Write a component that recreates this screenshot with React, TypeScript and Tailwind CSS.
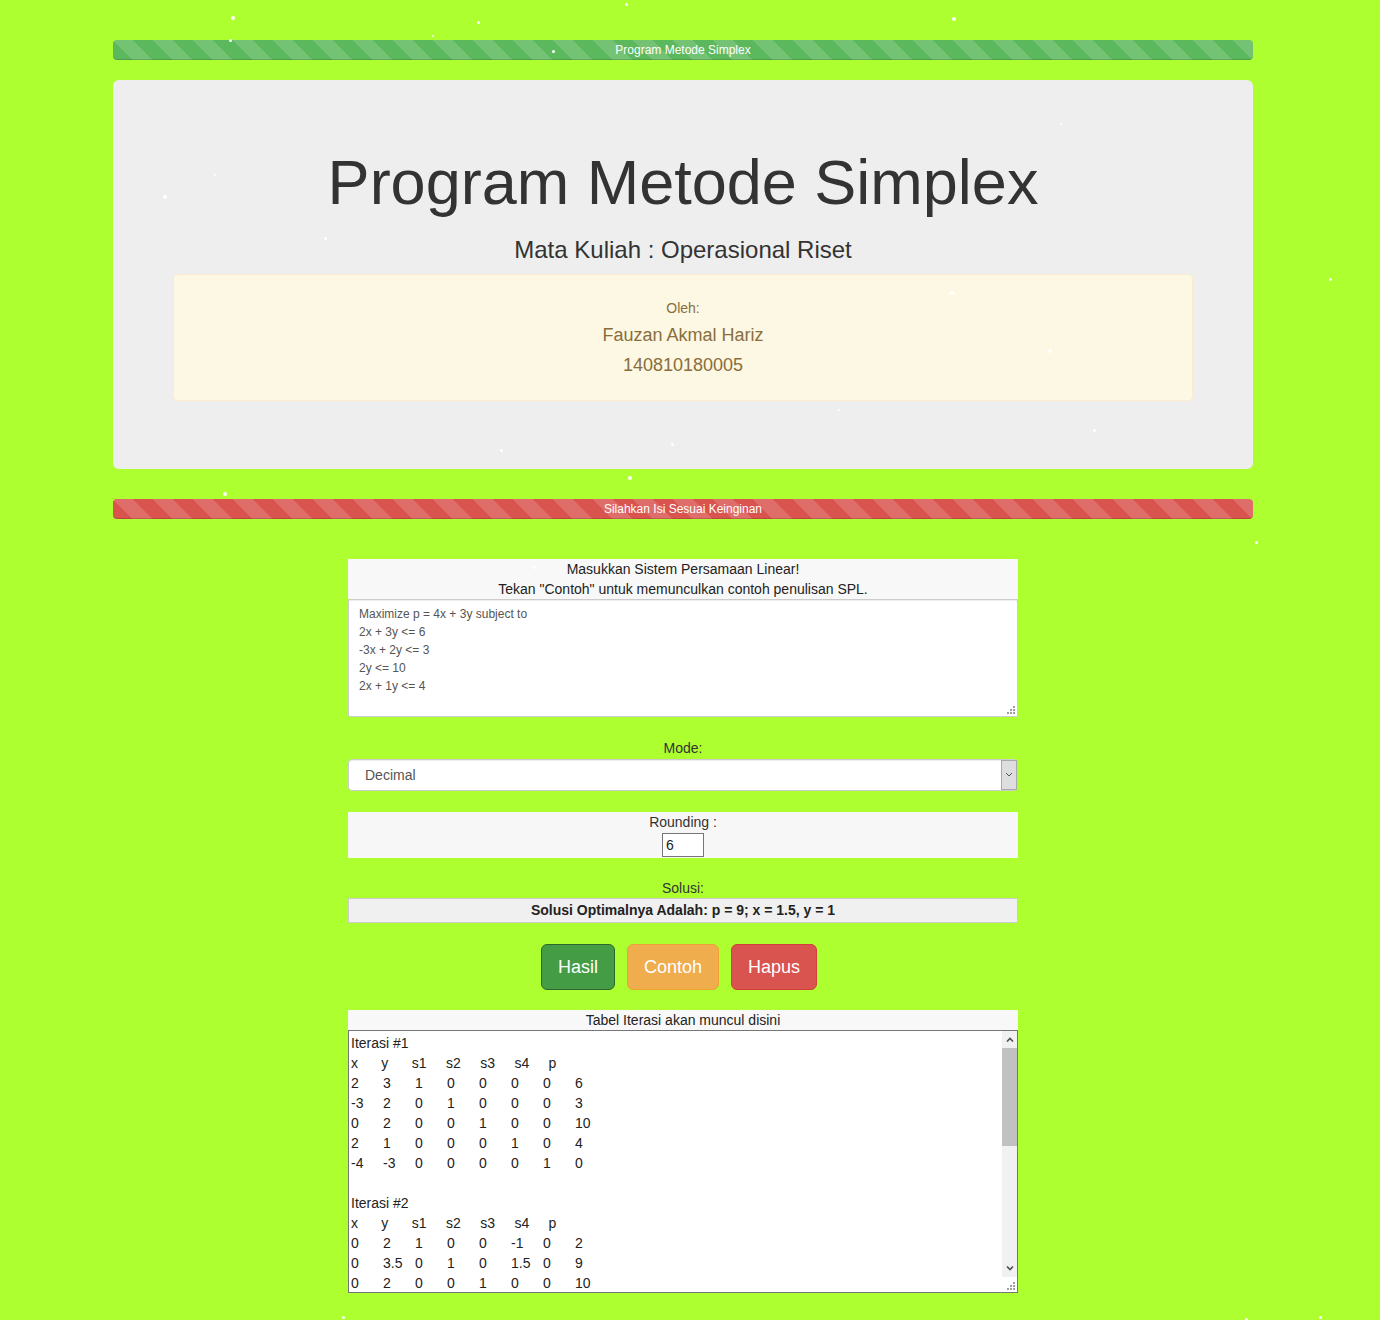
import { useState } from "react";

const stripes =
  "bg-[linear-gradient(45deg,rgba(255,255,255,.15)_25%,transparent_25%,transparent_50%,rgba(255,255,255,.15)_50%,rgba(255,255,255,.15)_75%,transparent_75%,transparent)] bg-[length:40px_40px]";

// snow flakes floating over the page
const flakes: [number, number, number][] = [
  [231, 16, 4], [477, 21, 3], [625, 3, 3], [952, 17, 4], [229, 39, 3], [552, 50, 3],
  [432, 35, 2], [163, 195, 4], [214, 174, 2], [324, 237, 3], [1329, 278, 3], [950, 291, 4],
  [1048, 349, 4], [838, 409, 2], [1093, 429, 3], [671, 443, 3], [500, 449, 3], [628, 476, 4],
  [223, 492, 4], [1255, 541, 3], [1245, 1318, 3], [342, 1316, 3], [1319, 1316, 3], [533, 566, 3],
  [1060, 123, 2],
];

const iter = (n: number, rows: string[]) =>
  [`Iterasi #${n}`, "x      y      s1     s2     s3     s4     p", ...rows].join("\n");

const tableText = [
  iter(1, [
    "2\t3\t1\t0\t0\t0\t0\t6",
    "-3\t2\t0\t1\t0\t0\t0\t3",
    "0\t2\t0\t0\t1\t0\t0\t10",
    "2\t1\t0\t0\t0\t1\t0\t4",
    "-4\t-3\t0\t0\t0\t0\t1\t0",
  ]),
  iter(2, [
    "0\t2\t1\t0\t0\t-1\t0\t2",
    "0\t3.5\t0\t1\t0\t1.5\t0\t9",
    "0\t2\t0\t0\t1\t0\t0\t10",
    "1\t0.5\t0\t0\t0\t0.5\t0\t2",
    "0\t-1\t0\t0\t0\t2\t1\t8",
  ]),
  iter(3, [
    "0\t1\t0.5\t0\t0\t-0.5\t0\t1",
    "0\t0\t-1.75\t1\t0\t3.25\t0\t5.5",
    "0\t0\t-1\t0\t1\t1\t0\t8",
    "1\t0\t-0.25\t0\t0\t0.75\t0\t1.5",
    "0\t0\t0.5\t0\t0\t1.5\t1\t9",
  ]),
].join("\n\n") + "\n\n";

const example = `Maximize p = 4x + 3y subject to
2x + 3y <= 6
-3x + 2y <= 3
2y <= 10
2x + 1y <= 4`;

function Grip() {
  return (
    <div className="pointer-events-none absolute right-[1px] bottom-[1px] flex h-[13px] w-[13px] items-end justify-end bg-white p-[2px]">
      <svg width="8" height="8" viewBox="0 0 8 8" fill="#a0a0a0">
        <rect x="6" y="0" width="2" height="2" />
        <rect x="3" y="3" width="2" height="2" />
        <rect x="6" y="3" width="2" height="2" />
        <rect x="0" y="6" width="2" height="2" />
        <rect x="3" y="6" width="2" height="2" />
        <rect x="6" y="6" width="2" height="2" />
      </svg>
    </div>
  );
}

function App() {
  const [spl, setSpl] = useState(example);
  const [rounding, setRounding] = useState("6");

  return (
    <div className="relative min-h-[1320px] overflow-hidden bg-[#adff2f] font-['Liberation_Sans',Arial,sans-serif] text-[14px] leading-[20px] text-[#333]">
      <div className="w-[1366px] pt-[40px] pb-[26px]">
        <div className="mx-auto w-[1140px]">
          <div className={`mb-[20px] h-[20px] rounded-[4px] bg-[#5cb85c] ${stripes} text-center text-[12px] leading-[20px] text-white shadow-[inset_0_-1px_0_rgba(0,0,0,0.15)]`}>
            Program Metode Simplex
          </div>

          <div className="mb-[30px] rounded-[6px] bg-[#eee] px-[60px] py-[48px] text-center">
            <h1 className="mt-[20px] text-[63px] leading-[1.1] font-normal">Program Metode Simplex</h1>
            <h3 className="mt-[20px] mb-[10px] text-[24px] leading-[1.1] font-normal">Mata Kuliah : Operasional Riset</h3>
            <div className="mb-[20px] rounded-[4px] border border-[#faebcc] bg-[#fcf8e3] pt-[23px] pb-[20px] text-[#8a6d3b]">
              <p className="mb-[2px]">Oleh:</p>
              <p className="text-[18px] leading-[30px]">Fauzan Akmal Hariz</p>
              <p className="text-[18px] leading-[30px]">140810180005</p>
            </div>
          </div>

          <div className={`mb-[40px] h-[20px] rounded-[4px] bg-[#d9534f] ${stripes} text-center text-[12px] leading-[20px] text-white shadow-[inset_0_-1px_0_rgba(0,0,0,0.15)]`}>
            Silahkan Isi Sesuai Keinginan
          </div>

          <div className="mx-auto w-[670px] text-center">
            <div className="bg-[#f8f8f8] text-[#222]">
              <p>Masukkan Sistem Persamaan Linear!</p>
              <p>Tekan "Contoh" untuk memunculkan contoh penulisan SPL.</p>
            </div>
            <div className="relative">
              <textarea
                value={spl}
                onChange={(e) => setSpl(e.target.value)}
                className="block h-[118px] w-full rounded-[2px] border border-[#ccc] bg-white px-[10px] py-[5px] text-left text-[12px] leading-[18px] text-[#555] shadow-[inset_0_1px_1px_rgba(0,0,0,0.075)] outline-none"
              />
              <Grip />
            </div>

            <p className="mt-[21px]">Mode:</p>
            <div className="relative mt-[1px]">
              <select className="block h-[32px] w-full appearance-none rounded-[4px] border border-[#ccc] bg-white pl-[16px] text-[14px] text-[#555] shadow-[inset_0_1px_1px_rgba(0,0,0,0.075)] outline-none">
                <option>Decimal</option>
                <option>Fraction</option>
              </select>
              <div className="pointer-events-none absolute top-[1px] right-[1px] flex h-[30px] w-[16px] items-center justify-center border border-[#a9a9a9] bg-[#dedede]">
                <svg width="8" height="5" viewBox="0 0 8 5">
                  <path d="M1 1l3 3 3-3" fill="none" stroke="#555" strokeWidth="1" />
                </svg>
              </div>
            </div>

            <div className="mt-[21px] bg-[#f7f7f7] pb-[1px]">
              <p>Rounding :</p>
              <input
                value={rounding}
                onChange={(e) => setRounding(e.target.value)}
                className="mt-[1px] h-[24px] w-[42px] border border-[#767676] bg-white px-[3px] text-[14px] text-[#222] outline-none"
              />
            </div>

            <p className="mt-[20px]">Solusi:</p>
            <div className="h-[25px] border border-[#ccc] bg-[#f0f0f0] leading-[23px] font-bold text-[#222]">
              Solusi Optimalnya Adalah: p = 9; x = 1.5, y = 1
            </div>

            <div className="mt-[21px] flex justify-center gap-[12px] pr-[8px]">
              <button className="cursor-pointer rounded-[6px] border border-[#2d672d] bg-[#449d44] px-[16px] py-[10px] text-[18px] leading-[24px] text-white">
                Hasil
              </button>
              <button
                onClick={() => setSpl(example)}
                className="cursor-pointer rounded-[6px] border border-[#eea236] bg-[#f0ad4e] px-[16px] py-[10px] text-[18px] leading-[24px] text-white"
              >
                Contoh
              </button>
              <button
                onClick={() => setSpl("")}
                className="cursor-pointer rounded-[6px] border border-[#d43f3a] bg-[#d9534f] px-[16px] py-[10px] text-[18px] leading-[24px] text-white"
              >
                Hapus
              </button>
            </div>

            <p className="mt-[20px] bg-[#f8f8f8] text-[#222]">Tabel Iterasi akan muncul disini</p>
            <div className="relative">
              <textarea
                readOnly
                value={tableText}
                className="block h-[263px] w-full overflow-y-hidden border border-[#767676] bg-white p-[2px] pr-[18px] text-left text-[14px] leading-[20px] text-[#222] outline-none [tab-size:32px]"
              />
              {/* scrollbar drawn over the textarea's right edge */}
              <div className="pointer-events-none absolute top-[1px] right-[1px] flex h-[246px] w-[15px] flex-col bg-[#f1f1f1]">
                <div className="flex h-[17px] items-center justify-center">
                  <svg width="8" height="5" viewBox="0 0 8 5">
                    <path d="M1 4.5l3-3 3 3" fill="none" stroke="#505050" strokeWidth="1.6" />
                  </svg>
                </div>
                <div className="h-[98px] bg-[#c1c1c1]" />
                <div className="flex-1" />
                <div className="flex h-[17px] items-center justify-center">
                  <svg width="8" height="5" viewBox="0 0 8 5">
                    <path d="M1 0.5l3 3 3-3" fill="none" stroke="#505050" strokeWidth="1.6" />
                  </svg>
                </div>
              </div>
              <Grip />
            </div>
          </div>
        </div>
      </div>

      {flakes.map(([x, y, s], i) => (
        <span
          key={i}
          className="pointer-events-none absolute rounded-full bg-white"
          style={{ left: x, top: y, width: s, height: s }}
        />
      ))}
    </div>
  );
}

export default App;
